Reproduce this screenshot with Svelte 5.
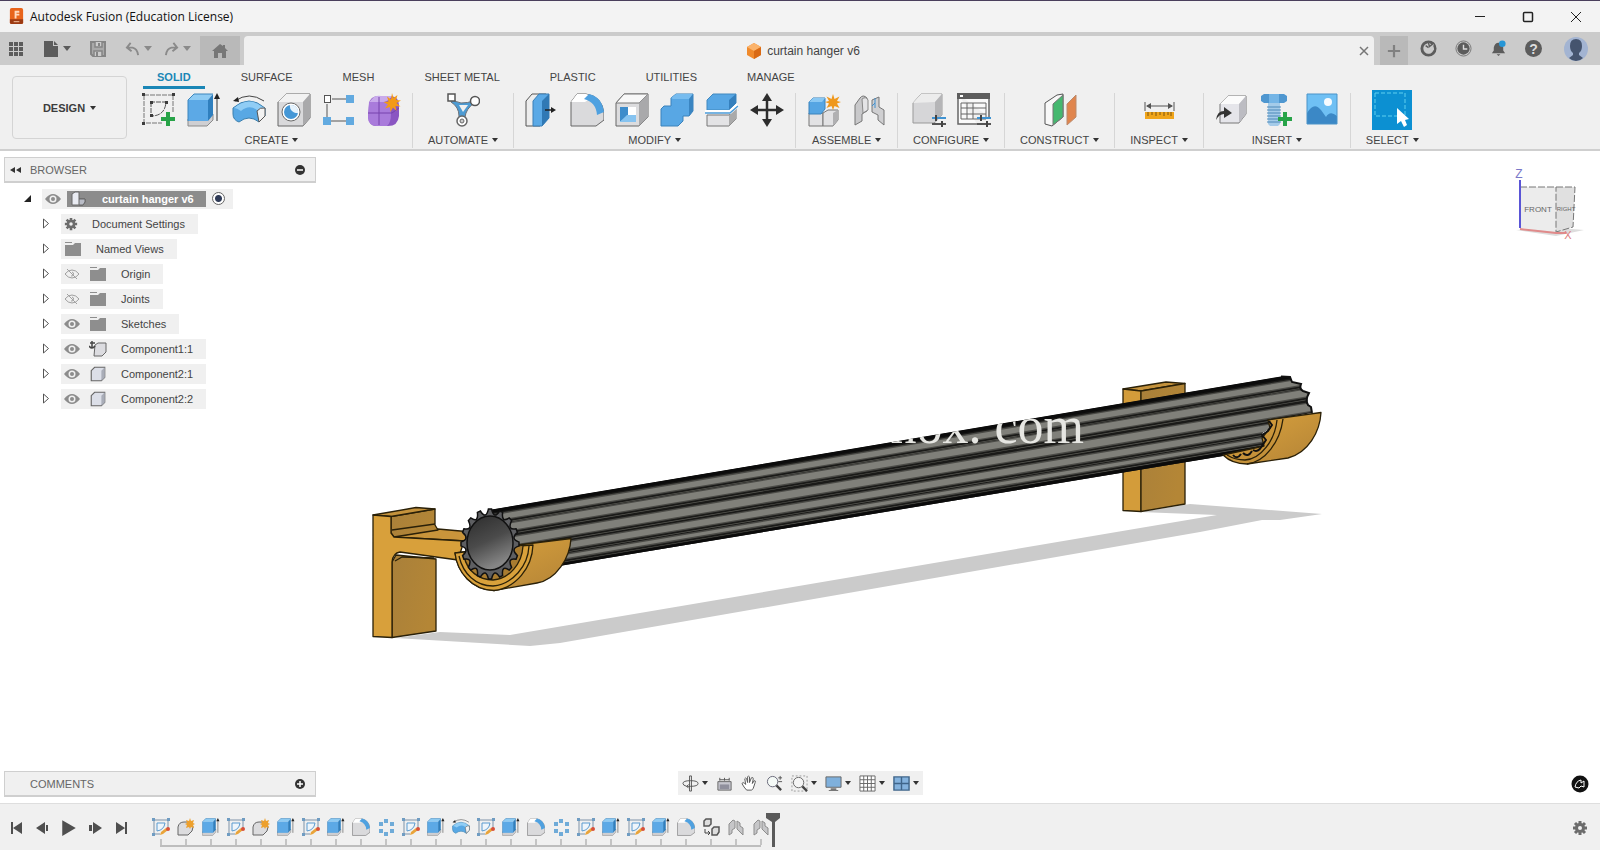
<script lang="ts">
  interface Group {
    label: string;
    tools: { icon: string; title: string }[];
    selected?: boolean;
  }

  interface TreeNode {
    label: string;
    icon: string;
    visible?: boolean;
  }

  const tabs = ["SOLID", "SURFACE", "MESH", "SHEET METAL", "PLASTIC", "UTILITIES", "MANAGE"];
  let activeTab = $state("SOLID");

  const groups: Group[] = [
    {
      label: "CREATE",
      tools: [
        { icon: "sketch", title: "Create Sketch" },
        { icon: "extrude", title: "Extrude" },
        { icon: "revolve", title: "Revolve" },
        { icon: "hole", title: "Hole" },
        { icon: "pattern", title: "Rectangular Pattern" },
        { icon: "form", title: "Create Form" },
      ],
    },
    { label: "AUTOMATE", tools: [{ icon: "automate", title: "Automated Modeling" }] },
    {
      label: "MODIFY",
      tools: [
        { icon: "presspull", title: "Press Pull" },
        { icon: "fillet", title: "Fillet" },
        { icon: "shell", title: "Shell" },
        { icon: "combine", title: "Combine" },
        { icon: "split", title: "Split Body" },
        { icon: "move", title: "Move" },
      ],
    },
    {
      label: "ASSEMBLE",
      tools: [
        { icon: "newcomp", title: "New Component" },
        { icon: "joint", title: "Joint" },
      ],
    },
    {
      label: "CONFIGURE",
      tools: [
        { icon: "configure", title: "Configure" },
        { icon: "conftable", title: "Configuration Table" },
      ],
    },
    { label: "CONSTRUCT", tools: [{ icon: "plane", title: "Offset Plane" }] },
    { label: "INSPECT", tools: [{ icon: "measure", title: "Measure" }] },
    {
      label: "INSERT",
      tools: [
        { icon: "derive", title: "Insert Derive" },
        { icon: "bolt", title: "Insert Fastener" },
        { icon: "picture", title: "Canvas" },
      ],
    },
    { label: "SELECT", tools: [{ icon: "select", title: "Select" }], selected: true },
  ];

  const nodes: TreeNode[] = [
    { label: "Document Settings", icon: "gear" },
    { label: "Named Views", icon: "folder" },
    { label: "Origin", icon: "folder", visible: false },
    { label: "Joints", icon: "folder", visible: false },
    { label: "Sketches", icon: "folder", visible: true },
    { label: "Component1:1", icon: "grounded", visible: true },
    { label: "Component2:1", icon: "body", visible: true },
    { label: "Component2:2", icon: "body", visible: true },
  ];

  const navTools = [
    { icon: "orbit", title: "Orbit", menu: true },
    { icon: "lookat", title: "Look At" },
    { icon: "pan", title: "Pan" },
    { icon: "zoom", title: "Zoom" },
    { icon: "fit", title: "Fit", menu: true },
    { icon: "display", title: "Display Settings", menu: true },
    { icon: "grid", title: "Grid and Snaps", menu: true },
    { icon: "viewports", title: "Viewports", menu: true },
  ];

  const playback = ["first", "back", "play", "forward", "last"];

  const features =
    "editsketch newform extrude editsketch newform extrude editsketch extrude fillet circular editsketch extrude revolve editsketch extrude fillet circular editsketch extrude editsketch extrude fillet rigid joint joint".split(
      " ",
    );

  // Flutes of the rod as [from, to] fractions of its height
  const flutes = [
    [0.09, 0.17],
    [0.25, 0.35],
    [0.46, 0.57],
    [0.67, 0.76],
    [0.85, 0.9],
  ];

  function band(from: number, to: number): string {
    const l = (f: number) => 510 + f * 68;
    const r = (f: number) => 371 + f * 69;
    return `M488 ${l(from)} L1314 ${r(from)} L1314 ${r(to)} L488 ${l(to)} Z`;
  }

  function gearOutline(cx: number, cy: number, rx: number, ry: number, teeth: number): string {
    const at = (angle: number, k: number) =>
      `${(cx + Math.cos(angle) * rx * k).toFixed(1)} ${(cy + Math.sin(angle) * ry * k).toFixed(1)}`;
    const step = (Math.PI * 2) / teeth;
    let d = `M${at(-step * 0.14, 1)}`;
    for (let i = 0; i < teeth; i++) {
      const a = i * step;
      d += ` L${at(a + step * 0.14, 1)} Q${at(a + step * 0.5, 0.7)} ${at(a + step * 0.86, 1)}`;
    }
    return `${d} Z`;
  }
</script>

{#snippet icon(name: string, size: number)}
  <svg class="icon" width={size} height={size} aria-hidden="true"><use href={`#i-${name}`} /></svg>
{/snippet}

<!-- Icon sheet -->
<svg class="sheet" width="0" height="0" aria-hidden="true">
  <defs>
    <linearGradient id="g-gold" x1="0" y1="0" x2="1" y2="1">
      <stop offset="0" stop-color="#dba33c" />
      <stop offset="0.5" stop-color="#c8943a" />
      <stop offset="1" stop-color="#b38336" />
    </linearGradient>
    <linearGradient id="g-side" x1="0" y1="0" x2="1" y2="0.4">
      <stop offset="0" stop-color="#a9803a" />
      <stop offset="1" stop-color="#b48636" />
    </linearGradient>
    <linearGradient id="g-bore" x1="0" y1="0" x2="0.4" y2="1">
      <stop offset="0" stop-color="#2c2c2c" />
      <stop offset="0.55" stop-color="#4b4b4b" />
      <stop offset="1" stop-color="#858585" />
    </linearGradient>
  </defs>

  <symbol id="i-sketch" viewBox="0 0 34 34">
    <path d="M2 2H31M2 2V30H20M31 2V20" fill="none" stroke="#777" stroke-dasharray="5 1" />
    <path d="M9 9V23Q23 23 24 9Z" fill="none" stroke="#555" stroke-dasharray="5 1" />
    <path d="M0 0h3v3h-3zM30 0h3v3h-3zM0 29h3v3h-3zM8 8h3v3h-3zM23 8h3v3h-3zM8 21h3v3h-3z" fill="#3c3c3c" />
    <path d="M24 19h4v5h5v4h-5v5h-4v-5h-5v-4h5z" fill="#27a348" />
  </symbol>
  <symbol id="i-extrude" viewBox="0 0 34 34">
    <path d="M1 26h20l5-5v6l-6 6H1z" fill="#cfcfd2" stroke="#8b8b8b" />
    <path d="M1 7l6-6h19l-5 6z" fill="#8ecbf3" />
    <path d="M1 7h20v21H1z" fill="#5ca9e6" />
    <path d="M21 7l5-6v21l-5 6z" fill="#2f7fbe" />
    <path d="M1 28V7l6-6h19" fill="none" stroke="#3d86bd" />
    <path d="M30 28V4" stroke="#333" />
    <path d="M30 0l3 6h-6z" fill="#222" />
  </symbol>
  <symbol id="i-revolve" viewBox="0 0 34 34">
    <path d="M3 8Q17 -2 32 8" fill="none" stroke="#444" />
    <path d="M1 8l5-4 1 5z" fill="#222" />
    <path d="M1 15Q17 1 33 15V23L27 29Q17 21 7 29Q1 27 1 21z" fill="#58a8e4" stroke="#3a7fae" />
    <path d="M2 15Q17 2 32 15Q27 15 25 17Q17 11 9 18Q5 15 2 15z" fill="#90cdf5" />
    <path d="M25 18q3-4 8-3v8l-6 6z" fill="#f2f2f2" stroke="#555" />
  </symbol>
  <symbol id="i-hole" viewBox="0 0 34 34">
    <path d="M1 9L9 1H33V25L26 33H1z" fill="#d9d9db" stroke="#666" />
    <path d="M1 9L9 1H33L26 9z" fill="#f2f2f2" />
    <path d="M26 9l7-8v24l-7 8z" fill="#a9a9ab" />
    <circle cx="14" cy="19" r="9" fill="#fff" stroke="#6a6a6a" />
    <circle cx="14" cy="19" r="7" fill="#4597d6" />
    <path d="M13 12a7 7 0 0 1 8 8a7 7 0 0 1 -8 -8z" fill="#e6f3fd" />
  </symbol>
  <symbol id="i-pattern" viewBox="0 0 34 34">
    <path d="M10 6h16M5 11v14M9 28h16" stroke="#555" fill="none" />
    <rect x="2.500" y="2.500" width="6" height="7" fill="#fff" stroke="#555" />
    <path d="M24 2h8v8h-8zM1 24h8v8h-8zM24 24h8v8h-8z" fill="#62aae0" />
  </symbol>
  <symbol id="i-form" viewBox="0 0 34 34">
    <path d="M2 11Q3 3 12 3H24Q32 4 32 12V23Q31 33 21 33H9Q2 33 1 24z" fill="#8a56c2" />
    <path d="M5 6Q8 2 14 3H25Q22 8 17 9H2z" fill="#c9abeb" />
    <path d="M2 9H18Q24 10 24 20T20 33H9Q1 32 1 24z" fill="#a97bdb" />
    <path d="M12 4v28M1 20h24l7-5M23 12l7-4" fill="none" stroke="#7643ad" />
    <path d="M25 0l1.500 5 4-3-1.500 5 5 .5-4.500 2.500 4 3.500-5-.5 1 5-3.500-3.500-2.500 4.500-.5-5-5 1.500 3-4-4.500-2.500 5-.5-1.500-5 4 3z" fill="#f39a16" />
  </symbol>
  <symbol id="i-automate" viewBox="0 0 34 34">
    <path d="M6 6Q10 9 15 10Q22 10 27 8L28 10Q20 16 19 24V28H13V23Q13 14 5 9z" fill="#4d9bd3" stroke="#6a7078" />
    <path d="M13 12h9l-5 7z" fill="#f0f0f0" />
    <rect x="2" y="1" width="7" height="7" fill="#fff" stroke="#555" stroke-width="1.500" />
    <circle cx="29" cy="8" r="4.500" fill="#fff" stroke="#555" stroke-width="1.500" />
    <circle cx="16" cy="28" r="5" fill="#fff" stroke="#666" stroke-width="1.500" />
    <circle cx="16" cy="28" r="2" fill="#ccc" stroke="#666" />
  </symbol>
  <symbol id="i-presspull" viewBox="0 0 34 34">
    <path d="M1 8l6-7h14l-6 7v25H1z" fill="#ededed" stroke="#555" />
    <path d="M8 8l6-7h10v24l-7 8H8z" fill="#5aa9e6" stroke="#3a7fb5" />
    <path d="M17 8l7-7v24l-7 8z" fill="#3079b5" />
    <path d="M20 17h7" stroke="#222" stroke-width="1.500" />
    <path d="M26 14l5 3-5 3z" fill="#222" />
  </symbol>
  <symbol id="i-fillet" viewBox="0 0 34 34">
    <path d="M1 9L7 1H16Q32 3 34 20V27L26 33H1z" fill="#dadadc" stroke="#666" />
    <path d="M1 9L7 1H16Q20 2 23 4L15 9z" fill="#fff" />
    <path d="M14 6L19 1Q32 4 34 19L27 22Q26 9 14 6z" fill="#4fa1e0" />
  </symbol>
  <symbol id="i-shell" viewBox="0 0 34 34">
    <path d="M1 10L9 1H33V24L24 33H1z" fill="#dcdcde" stroke="#666" />
    <path d="M1 10L9 1H33L24 10z" fill="#f8f8f8" stroke="#777" />
    <path d="M24 10l9-9v23l-9 9z" fill="#a9a9ab" />
    <rect x="5" y="14" width="16" height="15" fill="#fff" />
    <path d="M5 14h8v8l-8 7z" fill="#3d8ccb" />
    <path d="M5 29l7-7h9v7z" fill="#86c3f0" />
  </symbol>
  <symbol id="i-combine" viewBox="0 0 34 34">
    <path d="M1 16l3-3h7V5l5-4h17v17l-4 5h-6v5l-5 5H1z" fill="#58a7e4" stroke="#3b82bb" />
    <path d="M11 5l5-4h17l-4 5H13z" fill="#77bcef" />
    <path d="M29 6l4-5v17l-4 5z" fill="#3a85c1" />
  </symbol>
  <symbol id="i-split" viewBox="0 0 34 34">
    <path d="M2 22h22l7-7v11l-7 7H2z" fill="#e3e3e5" stroke="#777" />
    <path d="M24 22l7-7v11l-7 7z" fill="#aaa" />
    <path d="M2 7l6-6h23v9l-7 7H2z" fill="#58a7e4" stroke="#4189bf" />
    <path d="M24 7l7-6v9l-7 7z" fill="#3580bd" />
    <path d="M0 19h25l8-7" fill="none" stroke="#fff" stroke-width="4" />
    <path d="M0 20h25l8-7" fill="none" stroke="#4a9bd8" stroke-width="1.500" />
  </symbol>
  <symbol id="i-move" viewBox="0 0 34 34">
    <path d="M17 5v24M5 17h24" stroke="#2d2d2d" stroke-width="2.500" />
    <path d="M17 0l5 8H12zM17 34l5-8H12zM0 17l8-5v10zM34 17l-8-5v10z" fill="#2d2d2d" />
  </symbol>
  <symbol id="i-newcomp" viewBox="0 0 34 34">
    <path d="M2 20h14v13H2z" fill="#e2e2e4" stroke="#777" />
    <path d="M16 20l5-3h10v10l-5 6H16z" fill="#e2e2e4" stroke="#777" />
    <path d="M26 20l5-3v10l-5 6z" fill="#b0b0b2" />
    <path d="M2 9l4-4h12v11l-4 5H2z" fill="#55a5e3" stroke="#3b82bb" />
    <path d="M2 9l4-4h12l-3 4z" fill="#8ac8f3" />
    <path d="M26 1l1.500 5 5-2.500-2.500 4.500 4 1-4 1.500 2.500 4.500-5-2-1.500 4-1.500-4-5 2 2.500-4.500-4-1.500 4-1-2.500-4.500 5 2.500z" fill="#ef981c" />
  </symbol>
  <symbol id="i-joint" viewBox="0 0 34 34">
    <path d="M3 12L8 5Q11 1 15 5V18L10 21V28L3 32z" fill="#c9c9cb" stroke="#777" />
    <path d="M10 6Q14 3 16 7V17L11 20z" fill="#e4e4e6" stroke="#888" />
    <path d="M20 13V7L27 4V14L32 17V32L26 27V22L20 19z" fill="#cfcfd1" stroke="#777" />
    <path d="M20 13l3-3M23 5v10" stroke="#3f8fce" fill="none" />
  </symbol>
  <symbol id="i-jointsmall" viewBox="0 0 18 18">
    <path d="M2 6l4-4 2 1v7l-3 2v3l-3 2zM10 3l3 2v3l3 2v7l-3-3-3-3z" fill="#c6c6c8" stroke="#8d8d8d" />
  </symbol>
  <symbol id="i-configure" viewBox="0 0 34 34">
    <path d="M1 10L9 1H30V22L22 30H1z" fill="#d6d6d8" stroke="#999" />
    <path d="M1 10L9 1H30L23 9z" fill="#ececec" />
    <path d="M23 9l7-8v21l-7 8z" fill="#b5b5b7" />
    <path d="M20 25h14" stroke="#3f93d2" stroke-width="2" />
    <path d="M20 31h14" stroke="#555" stroke-width="2" />
    <path d="M24 22v6M30 28v6" stroke="#444" stroke-width="2" />
  </symbol>
  <symbol id="i-conftable" viewBox="0 0 34 34">
    <path d="M1 1h31v23M20 31H1V1" fill="#fafafa" stroke="#666" stroke-width="1.500" />
    <path d="M0 0h33v6H0z" fill="#5d5d5d" />
    <path d="M3 2h3v2H3z" fill="#fff" />
    <path d="M4 10h25v16H4zM4 15h25M4 21h25M10 10v16M16 10v16" fill="none" stroke="#666" />
    <path d="M20 25h14" stroke="#3f93d2" stroke-width="2" />
    <path d="M20 31h14" stroke="#555" stroke-width="2" />
    <path d="M24 22v6M30 28v6" stroke="#444" stroke-width="2" />
  </symbol>
  <symbol id="i-plane" viewBox="0 0 34 34">
    <path d="M2 10L14 2L20 1V24L9 33L2 31z" fill="#f8f8f8" stroke="#555" />
    <path d="M10 11L20 2V24L10 32z" fill="#45b86f" stroke="#777" />
    <path d="M24 11L33 2V24L24 32z" fill="#e0854d" stroke="#bb8a6d" />
  </symbol>
  <symbol id="i-measure" viewBox="0 0 34 34">
    <path d="M3 9v9M32 9v9M5 13h25" stroke="#555" />
    <path d="M4 13l5-3v6zM31 13l-5-3v6z" fill="#555" />
    <path d="M3 19h29v7H3z" fill="#f0a51b" />
    <path d="M6 19v4M10 19v3M14 19v4M18 19v3M22 19v4M26 19v3M29 19v4" stroke="#7a5410" />
  </symbol>
  <symbol id="i-derive" viewBox="0 0 34 34">
    <path d="M5 11l8-8h18v18l-7 9H5z" fill="#e5e5ea" stroke="#777" />
    <path d="M5 11l8-8h18l-7 8z" fill="#fbfbfb" />
    <path d="M24 11l7-8v18l-7 9z" fill="#bcbcc2" />
    <path d="M1 27Q2 18 9 18V14L17 20L9 25V21Q4 21 1 27z" fill="#333" />
  </symbol>
  <symbol id="i-bolt" viewBox="0 0 34 34">
    <path d="M1 3l3-2h20l3 2v5l-3 2H4l-3-2z" fill="#4f97d0" />
    <path d="M9 1h10v9H9z" fill="#74b5e6" />
    <path d="M8 10h12v21l-2 2h-8l-2-2z" fill="#a4cbe9" />
    <path d="M7 14h14M7 17h14M7 20h14M7 23h14M7 26h14M7 29h14" stroke="#4c88b8" />
    <path d="M23 19h4v5h5v4h-5v5h-4v-5h-5v-4h5z" fill="#27a348" />
  </symbol>
  <symbol id="i-picture" viewBox="0 0 34 34">
    <path d="M2 1h30v30H2z" fill="#6fc0f4" />
    <path d="M2 20Q9 8 16 17L21 24Q25 17 32 23V31H2z" fill="#3b88c6" />
    <circle cx="23" cy="9" r="4" fill="#f6fbff" />
    <path d="M2 1h30v30H2z" fill="none" stroke="#4a93c8" />
  </symbol>
  <symbol id="i-select" viewBox="0 0 40 40">
    <path d="M3 3h30v23H3z" fill="none" stroke="#5fd0f0" stroke-dasharray="4 2" />
    <path d="M25 18v16l4-3 3 6 3-2-2-5 4-1z" fill="#fff" />
  </symbol>

  <symbol id="i-logo" viewBox="0 0 16 18">
    <rect x="1" y="0" width="14" height="17" rx="2" fill="#e8641b" />
    <path d="M1 12h14v3q0 2-2 2H3q-2 0-2-2z" fill="#9c3a12" />
    <path d="M6 3h5v2H8v1h3v2H8v3H6z" fill="#ffd9bd" />
    <path d="M5 14h6v1H5z" fill="#f6c5a4" />
  </symbol>
  <symbol id="i-apps" viewBox="0 0 16 16">
    <path d="M1 1h4v4H1zM6 1h4v4H6zM11 1h4v4h-4zM1 6h4v4H1zM6 6h4v4H6zM11 6h4v4h-4zM1 11h4v4H1zM6 11h4v4H6zM11 11h4v4h-4z" fill="#5c5c5c" />
  </symbol>
  <symbol id="i-file" viewBox="0 0 16 16"><path d="M1 0h9v5h5v11H1zM11 0l4 4h-4z" fill="#5c5c5c" /></symbol>
  <symbol id="i-save" viewBox="0 0 16 16">
    <path d="M1 1h14v14H3l-2-2z" fill="#a9a9a9" stroke="#858585" stroke-width="2" />
    <path d="M5 1v5h7V1M4 15v-5h8v5" fill="#cbcbcb" stroke="#858585" stroke-width="1.500" />
    <path d="M9 2v3M7 11v4" stroke="#858585" stroke-width="2" />
  </symbol>
  <symbol id="i-undo" viewBox="0 0 16 16">
    <path d="M6 2L2 7l5 4M3 7h5q5 1 6 8" fill="none" stroke="#8a8a8a" stroke-width="2" />
  </symbol>
  <symbol id="i-redo" viewBox="0 0 16 16">
    <path d="M10 2l4 5-5 4M13 7H8Q3 8 2 15" fill="none" stroke="#8a8a8a" stroke-width="2" />
  </symbol>
  <symbol id="i-home" viewBox="0 0 16 16">
    <path d="M8 1L0 8h2v7h4v-5h4v5h4V8h2l-3-3V2h-2v1z" fill="#777" />
  </symbol>
  <symbol id="i-cube" viewBox="0 0 16 16">
    <path d="M8 0l7 4v8l-7 4-7-4V4z" fill="#f08a2c" />
    <path d="M8 0l7 4-7 4-7-4z" fill="#fbb36b" />
    <path d="M8 8l7-4v8l-7 4z" fill="#d96a15" />
  </symbol>
  <symbol id="i-close" viewBox="0 0 12 12"><path d="M2 2l8 8M10 2l-8 8" stroke="#777" stroke-width="1.500" /></symbol>
  <symbol id="i-plus" viewBox="0 0 16 16"><path d="M8 1v14M1 8h14" stroke="#808080" stroke-width="2.500" /></symbol>
  <symbol id="i-ext" viewBox="0 0 18 18">
    <circle cx="9" cy="9" r="7" fill="none" stroke="#5c5c5c" stroke-width="3" />
    <path d="M4 8l5-5 3 2 3-2-1 4 1 3-4 4H8l-3-3z" fill="#cbcbcb" />
    <path d="M9 3l1 4 5-4M6 6l3 2" fill="none" stroke="#5c5c5c" stroke-width="1.500" />
  </symbol>
  <symbol id="i-clock" viewBox="0 0 18 18">
    <circle cx="9" cy="9" r="8" fill="none" stroke="#777" />
    <circle cx="9" cy="9" r="6.500" fill="#5c5c5c" />
    <path d="M9 5v4.500h4" fill="none" stroke="#ddd" stroke-width="1.500" />
  </symbol>
  <symbol id="i-bell" viewBox="0 0 18 18">
    <path d="M2 14l2-3V8q1-5 5-5t5 5v3l2 3zM7 15h4l-2 2z" fill="#5c5c5c" />
    <circle cx="13" cy="4" r="3.500" fill="#2696d6" />
  </symbol>
  <symbol id="i-avatar" viewBox="0 0 24 24">
    <circle cx="12" cy="12" r="12" fill="#a3b4d2" />
    <path d="M12 2q6 0 6 7 0 5-3 7v2l4 3q-3 3-7 3t-7-3l4-3v-2q-3-2-3-7 0-7 6-7z" fill="#45546e" />
  </symbol>

  <symbol id="i-eye" viewBox="0 0 16 12">
    <path d="M0 6Q4 1 8 1t8 5q-4 5-8 5T0 6z" fill="#8c8c8c" />
    <circle cx="8" cy="6" r="3.500" fill="#f0f0f0" />
    <circle cx="8" cy="6" r="2" fill="#8c8c8c" />
  </symbol>
  <symbol id="i-eyeoff" viewBox="0 0 16 12">
    <path d="M1 6Q4 2 8 2t7 4q-3 4-7 4T1 6zM3 1l10 10M8 4a2 2 0 1 1-1 4" fill="none" stroke="#a0a0a0" />
  </symbol>
  <symbol id="i-folder" viewBox="0 0 18 14">
    <path d="M1 0h7v1H1zM1 3h8l2-2h6v13H1z" fill="#8e8e8e" />
  </symbol>
  <symbol id="i-gear" viewBox="0 0 16 16">
    <path d="M8 1v14M1 8h14M3 3l10 10M13 3L3 13" stroke="#6c6c6c" stroke-width="3" />
    <circle cx="8" cy="8" r="3.500" fill="#f0f0f0" stroke="#6c6c6c" stroke-width="3" />
  </symbol>
  <symbol id="i-body" viewBox="0 0 16 16">
    <path d="M2 5l3-3h9v9l-3 3H2z" fill="#dcdfe8" stroke="#666" />
    <path d="M11 5l3-3v9l-3 3z" fill="#a9adb8" />
  </symbol>
  <symbol id="i-grounded" viewBox="0 0 18 16">
    <path d="M6 4l3-2h8v9l-4 4H5z" fill="#dcdce0" stroke="#666" />
    <path d="M3 0v7M1 2h5M0 5q3 4 6 0" fill="none" stroke="#444" stroke-width="1.500" />
  </symbol>
  <symbol id="i-assembly" viewBox="0 0 16 16">
    <path d="M1 3l3-2h4v7h6v3l-2 3H1z" fill="#e9ebf2" stroke="#666" />
    <path d="M8 8h6v3l-2 3H8z" fill="#b9bcc6" stroke="#666" />
  </symbol>

  <symbol id="i-orbit" viewBox="0 0 18 18">
    <path d="M8 1h2v16H8zM1 9q0-3 8-3t8 3-8 3M1 9q0 2 4 3M9 12H5M7 10l-2 2 2 2" fill="none" stroke="#555" />
  </symbol>
  <symbol id="i-lookat" viewBox="0 0 18 18">
    <path d="M2 7h14v9H2z" fill="#c5c5cd" stroke="#666" />
    <path d="M4 5h10M4 3v3M9 3v3M14 3v3" stroke="#555" />
    <path d="M4 10h10v5H4z" fill="#8f8f9c" />
  </symbol>
  <symbol id="i-pan" viewBox="0 0 18 18">
    <path d="M6 16Q3 13 1 9q1-2 3 0l1 1L4 4q1-2 2 0l1 4V2q1-2 2 0v6l2-5q2-1 2 1l-1 5 2-3q2 0 1 2l-2 6q-1 2-2 2z" fill="#fff" stroke="#555" />
  </symbol>
  <symbol id="i-zoom" viewBox="0 0 18 18">
    <circle cx="7" cy="7" r="5.500" fill="#f5faf7" stroke="#667" />
    <path d="M11 11l5 5" stroke="#444" stroke-width="2.500" />
    <path d="M15 1v4M13 3h4M13 7h4" stroke="#555" />
  </symbol>
  <symbol id="i-fit" viewBox="0 0 18 18">
    <path d="M1 1h16v16H1z" fill="none" stroke="#999" stroke-dasharray="2 2" />
    <circle cx="8" cy="8" r="5.500" fill="#f5f5f5" stroke="#666" />
    <path d="M12 12l5 5" stroke="#444" stroke-width="2.500" />
  </symbol>
  <symbol id="i-display" viewBox="0 0 18 18">
    <path d="M1 2h16v11H1z" fill="#7fb0dc" stroke="#666" />
    <path d="M6 14h6v2H6zM4 16h10v1H4z" fill="#777" />
  </symbol>
  <symbol id="i-grid" viewBox="0 0 18 18">
    <path d="M1 1h16v16H1zM1 5h16M1 9h16M1 13h16M5 1v16M9 1v16M13 1v16" fill="#fff" stroke="#666" />
  </symbol>
  <symbol id="i-viewports" viewBox="0 0 18 18">
    <path d="M1 2h16v14H1zM9 2v14M1 9h16" fill="#84b2dd" stroke="#3f658a" stroke-width="1.500" />
  </symbol>

  <symbol id="i-first" viewBox="0 0 16 16"><path d="M2 2h2v12H2zM13 2v12L4 8z" fill="#4f4f4f" /></symbol>
  <symbol id="i-back" viewBox="0 0 16 16"><path d="M10 2v12L1 8zM11 5h2v6h-2z" fill="#4f4f4f" /></symbol>
  <symbol id="i-play" viewBox="0 0 16 16"><path d="M2 1v14l12-7z" fill="#4f4f4f" /></symbol>
  <symbol id="i-forward" viewBox="0 0 16 16"><path d="M6 2v12l9-6zM2 5h3v6H2z" fill="#4f4f4f" /></symbol>
  <symbol id="i-last" viewBox="0 0 16 16"><path d="M12 2h2v12h-2zM3 2v12l9-6z" fill="#4f4f4f" /></symbol>
  <symbol id="i-editsketch" viewBox="0 0 18 18">
    <path d="M2 2h14v8M2 2v14h6" fill="none" stroke="#7f93a8" />
    <path d="M5 5v8q7-1 8-8z" fill="#eef5fb" stroke="#5a9bd0" />
    <path d="M0 0h3v3H0zM15 0h3v3h-3zM0 15h3v3H0z" fill="#6f9cc2" />
    <path d="M8 17l1-3 5-4 2 2-5 4z" fill="#e9a43a" />
    <circle cx="16" cy="11" r="2" fill="#d9503a" />
  </symbol>
  <symbol id="i-newform" viewBox="0 0 18 18">
    <path d="M1 17V9q1-5 6-5h5q4 1 4 5l-1 4-4 4z" fill="#dcdcde" stroke="#666" />
    <path d="M13 0l1 3 3-1-1 3 2 1-2 1 1 3-3-1-1 2-1-2-3 1 1-3-2-1 2-1-1-3 3 1z" fill="#eda02c" />
  </symbol>
  <symbol id="i-circular" viewBox="0 0 18 18">
    <path d="M7 1h4v4H7zM7 14h4v4H7zM2 4h4v4H2zM2 11h4v4H2zM13 4h4v4h-4zM13 11h4v4h-4z" fill="#6fabd8" />
  </symbol>
  <symbol id="i-rigid" viewBox="0 0 18 18">
    <path d="M2 3l2-2h5v5L7 8H2zM10 11l2-2h5v5l-2 3h-5z" fill="#ddd" stroke="#555" stroke-width="1.500" />
    <path d="M3 11v4h4M6 13l2 2-2 2" fill="none" stroke="#444" />
  </symbol>
</svg>

<div class="app">
  <header class="titlebar">
    {@render icon("logo", 17)}
    <h1>Autodesk Fusion (Education License)</h1>
    <div class="window-controls">
      <button type="button" aria-label="Minimize">
        <svg width="12" height="12"><path d="M1 5.500h10" stroke="#222" /></svg>
      </button>
      <button type="button" aria-label="Maximize">
        <svg width="12" height="12"><rect x="1.500" y="1.500" width="9" height="9" rx="1" fill="none" stroke="#222" stroke-width="1.500" /></svg>
      </button>
      <button type="button" aria-label="Close">
        <svg width="12" height="12"><path d="M1 1l10 10M11 1L1 11" stroke="#222" /></svg>
      </button>
    </div>
  </header>

  <div class="docbar">
    <div class="quick">
      <button type="button" aria-label="Data Panel">{@render icon("apps", 16)}</button>
      <button type="button" aria-label="File">{@render icon("file", 16)}<i class="caret large"></i></button>
      <button type="button" aria-label="Save">{@render icon("save", 16)}</button>
      <div class="history">
        <button type="button" aria-label="Undo">{@render icon("undo", 15)}<i class="caret large dim"></i></button>
        <button type="button" aria-label="Redo">{@render icon("redo", 15)}<i class="caret large dim"></i></button>
      </div>
    </div>
    <button type="button" class="home" aria-label="Home">{@render icon("home", 16)}</button>
    <div class="doctab">
      <span class="doctitle">{@render icon("cube", 16)}curtain hanger v6</span>
      <button type="button" aria-label="Close tab">{@render icon("close", 12)}</button>
    </div>
    <button type="button" class="newtab" aria-label="New tab">{@render icon("plus", 14)}</button>
    <div class="status">
      <button type="button" aria-label="Extensions">{@render icon("ext", 17)}</button>
      <button type="button" aria-label="Job status">{@render icon("clock", 17)}</button>
      <button type="button" aria-label="Notifications">{@render icon("bell", 17)}</button>
      <button type="button" class="help" aria-label="Help">?</button>
      <button type="button" class="account" aria-label="Account">{@render icon("avatar", 24)}</button>
    </div>
  </div>

  <div class="ribbon">
    <button type="button" class="workspace">DESIGN <i class="caret"></i></button>
    <div class="ribbon-body">
      <div class="tabs" role="tablist">
        {#each tabs as tab (tab)}
          <button
            type="button"
            role="tab"
            aria-selected={tab === activeTab}
            class={tab === activeTab ? "tab is-active" : "tab"}
            onclick={() => (activeTab = tab)}
          >
            {tab}
          </button>
        {/each}
      </div>
      <div class="groups">
        {#each groups as group (group.label)}
          <section class="group">
            <div class="tools">
              {#each group.tools as tool (tool.icon)}
                <button type="button" class:selected={group.selected} aria-label={tool.title}>
                  {@render icon(tool.icon, group.selected ? 40 : 34)}
                </button>
              {/each}
            </div>
            <button type="button" class="group-label">{group.label}<i class="caret"></i></button>
          </section>
        {/each}
      </div>
    </div>
  </div>

  <main class="canvas">
    <svg class="scene" viewBox="0 151 1600 652" role="img" aria-label="Curtain rod on two brackets">
      <defs>
        <clipPath id="rod-clip">
          <path
            d="M489 510L1281 376.500L1290 377L1292 382L1301 384Q1299 389 1303 391L1309 393Q1305 400 1308 405L1311 407L1312 413L1272 420L1270 428L1262 433L1266 440L1264 446L1223 456L568 564.500L495 577Z"
          />
        </clipPath>
      </defs>

      <path
        d="M395 638L440 632L510 635L1217 515L1140 512L1190 504L1322 514L1280 520L1262 520L1200 532L560 643L530 646Z"
        fill="#cbcbcb"
      />

      <g stroke="#2a2008" stroke-width="1.300" stroke-linejoin="round">
        <path d="M1123 389L1166 382L1185 383.500L1141 391Z" fill="#c4923c" />
        <path d="M1123 389L1141 391V511.500L1123 510.500Z" fill="#d39c3a" />
        <path d="M1141 391L1185 383.500V504L1141 511.500Z" fill="url(#g-side)" />
      </g>

      <g clip-path="url(#rod-clip)">
        <path d="M480 360H1320V600H480Z" fill="#1a1a18" />
        {#each flutes as [from, to]}
          <path d={band(from - 0.02, to + 0.02)} fill="#4a4a46" />
          <path d={band(from, to)} fill="#80807a" />
          <path d={band(to + 0.045, to + 0.055)} fill="#5c5c56" />
        {/each}
        <path d={band(0, 0.05)} fill="#0b0b0b" />
        <path d={band(0.96, 1.02)} fill="#0b0b0b" />
        <text class="stamp" x="1084" y="443" text-anchor="end">nox. com</text>
      </g>
      <path
        d="M1281 376.500L1290 377L1292 382L1301 384Q1299 389 1303 391L1309 393Q1305 400 1308 405L1311 407L1312 413"
        fill="none"
        stroke="#111"
        stroke-width="2"
      />

      <g stroke="#2a2008" stroke-width="1.300" stroke-linejoin="round">
        <path
          d="M1268 420L1321 412.500C1320 432 1308 453 1288 458L1247 464C1237 464 1229 461 1223 455L1264 446L1262 438L1270 428Z"
          fill="url(#g-gold)"
        />
        <path d="M1283 419C1280 442 1265 462 1247 464" fill="none" />
        <path d="M1277 420C1275 440 1261 459 1245 460Q1235 460 1227 455" fill="none" />
        <path
          d="M1233 455q4 5 8-1M1243 453q5 5 9-2M1253 450q5 3 9-4l4-6-4-5 6-4 4-6-3-4"
          fill="none"
          stroke="#111"
          stroke-width="2"
        />
      </g>

      <g stroke="#2a2008" stroke-width="1.300" stroke-linejoin="round">
        <path d="M392 537L438 529L466 531.500V541Z" fill="#c9953b" />
        <path d="M391 516.500L435 509V525L438 530L394 537L391 533Z" fill="url(#g-side)" />
        <path d="M392 530L435 524" fill="none" />
        <path d="M373 515L416 507.500L435 509L391 516.500Z" fill="#c4923c" />
        <path d="M392 562L396 555L436 559V631L392 637.500Z" fill="url(#g-side)" />
        <path
          d="M373 515L391 516.500V533L394 537L464 541L458 560L400 552Q393 553 392 562V637.500L373 636.500Z"
          fill="#d8a03b"
        />
        <path d="M395 561L402 557L434 558" fill="none" />

        <path
          d="M518 545L571 538.500C570 558 556 580 537 583L494 590.500C472 590 457 572 455 553Z"
          fill="url(#g-gold)"
        />
        <path d="M455 553C457 572 472 590 494 590.500C516 588 532 568 533 545L518 546Z" fill="#d9a13b" />
        <path d="M459 556C463 574 476 586 493 586C513 584 528 566 529 546" fill="none" />
        <path d="M464 556C467 571 479 580 493 580C509 579 522 564 523 546" fill="#a97c30" />
      </g>
      <path d={gearOutline(490, 544, 29, 35, 16)} fill="#5e5f62" stroke="#111" stroke-width="1.500" />
      <ellipse cx="490" cy="543" rx="23" ry="27" fill="url(#g-bore)" stroke="#111" stroke-width="1.500" />
    </svg>

    <svg class="viewcube" width="90" height="84" viewBox="1506 163 90 84" role="img" aria-label="View cube">
      <path d="M1516 230L1556 236L1584 230L1560 228Z" fill="#ddd" />
      <path d="M1520 187L1556 187V232L1520 228Z" fill="#ececec" />
      <path d="M1556 187H1575L1573 227L1556 232Z" fill="#e0e0e0" />
      <path
        d="M1520 187H1575L1573 227L1556 232V187"
        fill="none"
        stroke="#777"
        stroke-dasharray="7 2"
      />
      <path d="M1520 180V228" stroke="#5a55d6" stroke-width="2" />
      <path d="M1520 229L1556 233H1566" stroke="#e08a8a" stroke-width="2" fill="none" />
      <text x="1519" y="178" class="axis-z">Z</text>
      <text x="1568" y="239" class="axis-x">X</text>
      <text x="1538" y="212" class="face">FRONT</text>
      <text x="1566" y="211" class="face small">RIGHT</text>
    </svg>

    <aside class="browser">
      <header class="panel">
        <svg width="12" height="8"><path d="M5 1v6L0 4zM11 1v6L6 4z" fill="#333" /></svg>
        <h2>BROWSER</h2>
        <button type="button" class="dot" aria-label="Collapse browser">
          <svg width="10" height="10"><circle cx="5" cy="5" r="5" fill="#333" /><path d="M2 5h6" stroke="#fff" stroke-width="1.500" /></svg>
        </button>
      </header>

      <ul class="tree">
        <li class="root">
          <button type="button" class="twist" aria-label="Collapse">
            <svg width="9" height="9"><path d="M8 1v7H1z" fill="#222" /></svg>
          </button>
          <div class="row">
            {@render icon("eye", 16)}
            <span class="current">{@render icon("assembly", 16)}curtain hanger v6</span>
            <input type="radio" checked aria-label="Activate curtain hanger v6" />
          </div>
        </li>
        {#each nodes as node (node.label)}
          <li>
            <button type="button" class="twist" aria-label={`Expand ${node.label}`}>
              <svg width="8" height="11"><path d="M1.500 1v9l5-4.500z" fill="#fff" stroke="#555" /></svg>
            </button>
            <div class={node.visible === undefined ? "row" : "row nested"}>
              {#if node.visible !== undefined}
                {@render icon(node.visible ? "eye" : "eyeoff", 16)}
              {/if}
              {@render icon(node.icon, node.icon === "gear" ? 14 : 18)}
              <span>{node.label}</span>
            </div>
          </li>
        {/each}
      </ul>
    </aside>

    <div class="canvas-foot">
      <div class="panel comments">
        <h2>COMMENTS</h2>
        <button type="button" class="dot" aria-label="Expand comments">
          <svg width="10" height="10"><circle cx="5" cy="5" r="5" fill="#333" /><path d="M2 5h6M5 2v6" stroke="#fff" stroke-width="1.500" /></svg>
        </button>
      </div>
      <nav class="navbar" aria-label="Navigation">
        {#each navTools as tool (tool.icon)}
          <button type="button" aria-label={tool.title}>
            {@render icon(tool.icon, 17)}
            {#if tool.menu}<i class="caret"></i>{/if}
          </button>
        {/each}
      </nav>
      <button type="button" class="assist" aria-label="Assistant">
        <svg width="18" height="18">
          <circle cx="9" cy="9" r="8.500" fill="#111" />
          <path d="M4 12q1-6 6-7v3l3-2v6l-3-1-2 2z" fill="none" stroke="#fff" />
        </svg>
      </button>
    </div>
  </main>

  <footer class="timeline">
    <div class="playback">
      {#each playback as name (name)}
        <button type="button" aria-label={name}>{@render icon(name, name === "play" ? 18 : 16)}</button>
      {/each}
    </div>
    <ol class="features">
      {#each features as feature, index (index)}
        <li>
          <button type="button" aria-label={feature}>
            {@render icon(feature === "joint" ? "jointsmall" : feature, 18)}
          </button>
        </li>
      {/each}
    </ol>
    <svg class="marker" width="14" height="34" aria-hidden="true">
      <path d="M0 0h14v5L9 9v25H6V9L0 5z" fill="#5a5a5a" />
    </svg>
    <button type="button" class="settings" aria-label="Timeline settings">{@render icon("gear", 16)}</button>
  </footer>
</div>

<style>
  :global(body) {
    background: #fff;
    font-family: "Liberation Sans", Arial, sans-serif;
    font-size: 11px;
    color: #444;
  }

  .app {
    display: flex;
    flex-direction: column;
    min-height: 100vh;
  }

  button {
    display: flex;
    align-items: center;
    justify-content: center;
    padding: 0;
    border: 0;
    background: none;
    color: inherit;
    font: inherit;
    cursor: pointer;
  }

  h1,
  h2 {
    margin: 0;
    font-weight: normal;
  }

  .sheet {
    position: absolute;
  }

  .icon {
    display: block;
    flex: none;
  }

  .caret {
    border: 3px solid transparent;
    border-top: 4px solid #333;
    border-bottom: 0;
  }

  .caret.large {
    border-width: 4px 4px 0;
    border-top-width: 5px;
    border-top-color: #5c5c5c;
  }

  .caret.large.dim {
    border-top-color: #8a8a8a;
  }

  /* Title bar */
  .titlebar {
    display: flex;
    align-items: center;
    gap: 5px;
    box-sizing: border-box;
    height: 32px;
    padding-left: 8px;
    border-top: 1px solid #4a3f5c;
    background: #f3f3f3;
  }

  .titlebar h1 {
    flex: 1;
    font-family: "Open Sans", "Noto Sans", sans-serif;
    font-size: 12px;
    color: #111;
  }

  .window-controls {
    display: flex;
  }

  .window-controls button {
    width: 48px;
    height: 31px;
  }

  /* Document bar */
  .docbar {
    display: flex;
    align-items: stretch;
    height: 33px;
    background: #cbcbcb;
  }

  .quick,
  .history,
  .status {
    display: flex;
    align-items: center;
  }

  .quick {
    gap: 19px;
    padding: 0 9px 0 8px;
  }

  .quick button {
    gap: 4px;
  }

  .history {
    gap: 12px;
  }

  .home,
  .newtab {
    margin-top: 4px;
    background: #b9b9b9;
  }

  .home {
    width: 40px;
  }

  .doctab {
    display: flex;
    flex: 1;
    align-items: center;
    margin: 4px 6px 0 4px;
    padding: 0 4px;
    border-radius: 4px 4px 0 0;
    background: #f0f0f0;
  }

  .doctitle {
    display: flex;
    flex: 1;
    align-items: center;
    justify-content: center;
    gap: 5px;
    font-size: 12px;
  }

  .newtab {
    width: 28px;
  }

  .status {
    gap: 18px;
    padding: 0 12px;
  }

  .help {
    width: 17px;
    height: 17px;
    border-radius: 50%;
    background: #5c5c5c;
    color: #ddd;
    font-size: 14px;
    font-weight: bold;
  }

  .account {
    margin-left: 4px;
  }

  /* Ribbon */
  .ribbon {
    display: flex;
    box-sizing: border-box;
    height: 86px;
    border-bottom: 2px solid #cfcfcf;
    background: #f0f0f0;
  }

  .workspace {
    gap: 5px;
    box-sizing: border-box;
    width: 115px;
    height: 63px;
    margin: 11px 4px 0 12px;
    border: 1px solid #d4d4d4;
    border-radius: 4px;
    font-weight: bold;
    color: #3c3c3c;
  }

  .tabs {
    display: flex;
    gap: 22px;
    padding-left: 12px;
  }

  .tab {
    box-sizing: border-box;
    height: 24px;
    padding: 2px 14px 0;
    border-bottom: 3px solid transparent;
  }

  .tab.is-active {
    border-color: #1a86b6;
    color: #1a86b6;
    font-weight: bold;
  }

  .groups {
    display: flex;
    margin-top: 4px;
  }

  .group {
    display: flex;
    flex-direction: column;
    align-items: center;
    height: 55px;
  }

  .group + .group {
    border-left: 1px solid #d6d6d6;
  }

  .tools {
    display: flex;
    align-items: center;
    gap: 11px;
    height: 34px;
    padding: 0 11px;
  }

  .tools .selected {
    margin: 0 10px;
    background: #0c90d2;
  }

  .group-label {
    gap: 4px;
    height: 24px;
    padding: 4px 15px 0;
  }

  /* Canvas */
  .canvas {
    position: relative;
    display: flex;
    flex: 1;
    flex-direction: column;
    justify-content: space-between;
  }

  .scene {
    position: absolute;
    inset: 0;
    width: 100%;
    height: 100%;
  }

  .stamp {
    font-family: "Liberation Serif", serif;
    font-size: 52px;
    fill: #e6e6e2;
  }

  .viewcube {
    position: absolute;
    top: 12px;
    right: 4px;
    text-anchor: middle;
  }

  .axis-z {
    font-size: 12px;
    fill: #7a78c8;
  }

  .axis-x {
    font-size: 11px;
    fill: #dc8080;
  }

  .face {
    font-size: 8px;
    fill: #666;
  }

  .face.small {
    font-size: 6px;
  }

  .browser {
    position: relative;
    padding: 6px 0 0 4px;
  }

  .panel {
    display: flex;
    align-items: center;
    box-sizing: border-box;
    width: 312px;
    height: 26px;
    padding: 0 10px 0 5px;
    border: 1px solid #cfcfcf;
    border-width: 1px 1px 2px;
    background: #f0f0f0;
  }

  .panel h2 {
    flex: 1;
    margin-left: 8px;
    font-size: 11px;
    color: #666;
  }

  .panel.comments h2 {
    margin-left: 20px;
  }

  .tree {
    margin: 3px 0 0;
    padding: 0;
    list-style: none;
  }

  .tree li {
    display: flex;
    align-items: center;
    height: 25px;
    padding-left: 37px;
  }

  .tree li.root {
    padding-left: 18px;
  }

  .twist {
    width: 10px;
    height: 20px;
  }

  .row {
    display: flex;
    align-items: center;
    gap: 14px;
    height: 20px;
    margin-left: 10px;
    padding: 0 13px 0 3px;
    background: #f0f0f0;
  }

  .row.nested {
    gap: 9px;
  }

  .row.nested span {
    margin-left: 5px;
  }

  .root .row {
    gap: 6px;
    padding-right: 8px;
  }

  .current {
    display: flex;
    align-items: center;
    gap: 15px;
    height: 16px;
    padding: 0 12px 0 4px;
    background: #8c8c8c;
    color: #fff;
    font-weight: bold;
  }

  .root input {
    appearance: none;
    width: 13px;
    height: 13px;
    margin: 0;
    border: 1px solid #666;
    border-radius: 50%;
    background: radial-gradient(circle, #2f3b57 0 3px, #fff 4px);
  }

  .canvas-foot {
    position: relative;
    display: grid;
    grid-template-columns: 1fr auto 1fr;
    align-items: center;
    padding: 0 4px 6px;
  }

  .navbar {
    display: flex;
    align-items: center;
    align-self: start;
    gap: 8px;
    height: 24px;
    padding: 0 4px;
    background: #f0f0f0;
  }

  .navbar button {
    gap: 3px;
  }

  .assist {
    justify-self: end;
    margin-right: 7px;
  }

  /* Timeline */
  .timeline {
    display: flex;
    align-items: flex-start;
    box-sizing: border-box;
    height: 47px;
    padding: 0 12px 0 4px;
    border-top: 1px solid #dedede;
    background: #f0f0f0;
  }

  .playback {
    display: flex;
    height: 48px;
    margin-right: 14px;
  }

  .playback button {
    width: 26px;
  }

  /* The rail runs from the centre of the first feature to that of the last */
  .features {
    display: flex;
    margin: 14px 0 0;
    padding: 0 0 2px;
    background: linear-gradient(#bdbdbd, #bdbdbd) bottom / calc(100% - 24px) 2px no-repeat;
    list-style: none;
  }

  .features li {
    display: flex;
    flex-direction: column;
    align-items: center;
    width: 25px;
  }

  .features li::after {
    content: "";
    width: 2px;
    height: 6px;
    margin-top: 3px;
    background: #c4c4c4;
  }

  .marker {
    margin: 9px 0 0 -7px;
  }

  .settings {
    margin: 16px 0 0 auto;
  }
</style>
